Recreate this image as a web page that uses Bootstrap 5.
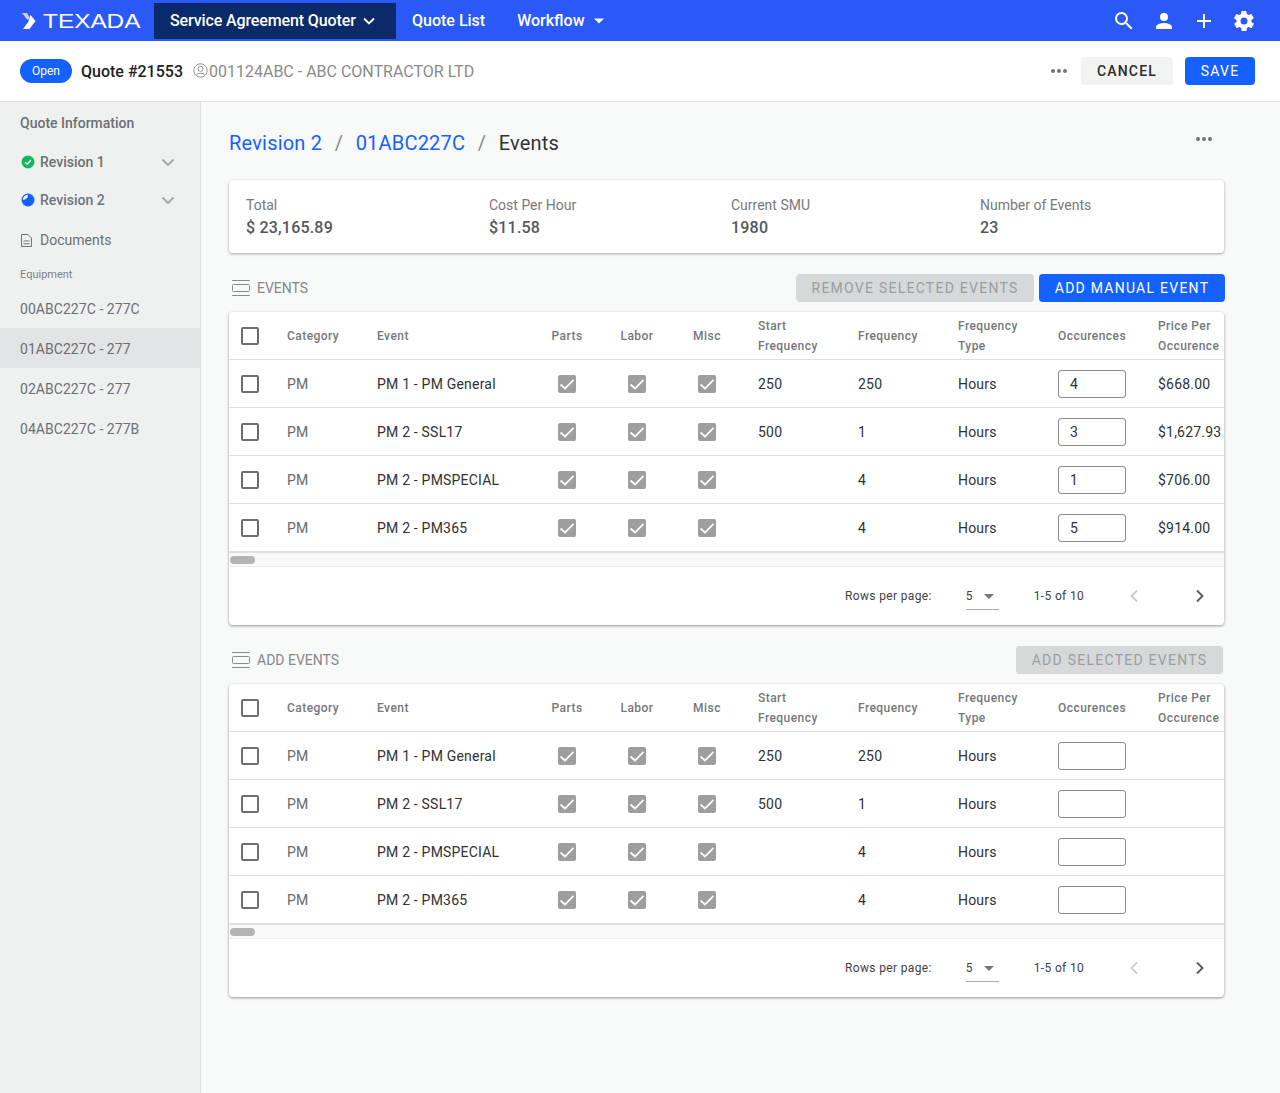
<!DOCTYPE html>
<html lang="en">
<head>
<meta charset="utf-8">
<title>Service Agreement Quoter</title>
<link href="https://cdn.jsdelivr.net/npm/bootstrap@5.3.0/dist/css/bootstrap.min.css" rel="stylesheet">
<style>
html,body{height:100%}
body{font-family:Roboto,"Liberation Sans",sans-serif;background:#f8f9f9;color:#2b2b2b;font-size:14px;overflow:hidden}
.shell{height:1093px;display:flex;flex-direction:column}
.topbar{height:41px;background:#2b59f7;padding:0;flex:none;align-items:stretch;justify-content:flex-start;flex-wrap:nowrap}
.brandbox{width:154px;display:flex;align-items:center;padding-left:22px;gap:7px;color:#fff;text-decoration:none;overflow:hidden}
.brandtxt{font-family:"Liberation Sans",sans-serif;font-size:21px;font-weight:400;line-height:1;display:inline-block;transform:scaleX(1.16);transform-origin:left center}
.topnav{display:flex;align-items:center;gap:0;height:41px}
.topnav a{color:#fff;text-decoration:none;font-size:16px;font-weight:500;display:flex;align-items:center;height:36px;margin-top:1px}
.topnav a.on{background:#0a2a69;width:242px;padding-left:16px;gap:6px;margin-right:16px;letter-spacing:-.12px}
.topnav a.plain{margin-right:32px}
.topicons{margin-left:auto;display:flex;align-items:center;gap:16px;padding-right:24px}
.subbar{height:61px;background:#fff;border-bottom:1px solid #e2e3e3;flex:none;padding:0 25px 0 20px;display:flex;align-items:center}
.pill-open{background:#1561ff;color:#fff;font-size:12px;font-weight:400;width:52px;height:24px;border-radius:12px;display:flex;align-items:center;justify-content:center}
.quote-no{font-size:16px;font-weight:500;color:#222;margin-left:9px;padding-top:2px}
.customer{font-size:16px;color:#8a8a8a;margin-left:10px;display:flex;align-items:center;gap:1px;padding-top:2px}
.customer svg{margin-top:-3px}
.btn-cancel,.btn-save,.btn-off{font-size:14px;font-weight:500;letter-spacing:1.2px;border-radius:4px;height:28px;line-height:28px;padding:0;border:0;text-transform:uppercase}
.btn-cancel{background:#f2f3f3;color:#2b2b2b;width:92px;margin-left:14px}
.btn-save{background:#1561ff;color:#fff;width:70px;margin-left:12px;font-weight:400;letter-spacing:1.25px}
.btn-save:hover,.btn-save:focus{background:#1561ff;color:#fff}
.btn-off,.btn-off:disabled{background:#d6d8d9;color:#9b9ea0;opacity:1;font-weight:400;letter-spacing:1.25px}
.dots{display:inline-flex;gap:2px}
.dots i{width:4px;height:4px;border-radius:50%;background:#707274;display:block}
.bodywrap{flex:1;display:flex;min-height:0}
.sidepane{width:201px;flex:none;background:#eff1f1;border-right:1px solid #dcdfdf;padding-top:1px;color:#6d6f71}
.side-h{font-size:14px;font-weight:500;color:#6d6f71;padding:10px 20px 0;height:40px}
.side-row{display:flex;align-items:center;padding:0 25px 0 21px;font-size:14px;font-weight:500;gap:5px;height:38px}
.side-row svg.chev{margin-left:auto}
.side-doc{font-weight:400;height:40px;margin-top:1px;gap:8px}
.side-eq{font-size:11px;color:#7d7f81;padding:0 20px;margin-top:2px;height:26px;line-height:26px}
.side-item{height:40px;line-height:42px;padding:0 20px;font-size:14px;color:#6d6f71;letter-spacing:.05px}
.side-item.on{background:#e3e4e5}
.mainpane{flex:1;padding:0 56px 0 28px;min-width:0}
.crumbrow{display:flex;height:78px;padding-top:28px;position:relative}
.crumbs{--bs-breadcrumb-divider-color:#8a8a8a;--bs-breadcrumb-item-padding-x:12.5px;--bs-breadcrumb-margin-bottom:0;font-size:20px;line-height:26px;letter-spacing:.2px}
.crumbs a{color:#1561ff;text-decoration:none}
.crumbs .active{color:#333}
.crumbdots{position:absolute;right:12px;top:35px}
.statcard{height:73px;background:#fff;border-radius:4px;box-shadow:0 1px 3px rgba(0,0,0,.35);display:flex;padding:15px 0 0 17px;margin-bottom:21px}
.statlbl{font-size:14px;color:#77797b;line-height:20px}
.statval{font-size:16px;font-weight:500;color:#55575a;line-height:22px;margin-top:2px;letter-spacing:.2px}
.w1{width:243px}.w2{width:242px}.w3{width:249px}
.secthead{display:flex;align-items:center;height:28px;margin-bottom:10px;padding-left:3px;font-size:14px;color:#85878a;gap:7px;margin-right:-1px}
.off1{width:238px;margin-left:auto}
.add1{width:186px;margin-left:-2px}
.off2{width:207px;margin-left:auto;margin-right:2px}
.tblcard{background:#fff;border-radius:4px;box-shadow:0 1px 3px rgba(0,0,0,.4);height:313px;overflow:hidden;margin-bottom:21px}
.tblclip{overflow:hidden;height:240px}
.evt{table-layout:fixed;width:1013px;border-collapse:separate;border-spacing:0;margin:0}
.evt th,.evt td{padding:0;vertical-align:middle;border-bottom:1px solid #e0e0e0;white-space:nowrap;background:transparent}
.evt th{height:48px;font-size:12px;font-weight:500;color:#75777a;letter-spacing:.45px;line-height:20px}
.evt td{height:48px;font-size:14px;color:#2f3133;letter-spacing:.2px;padding-top:2px}
.evt td.cat{color:#66686a}
.evt .ctr{text-align:center}
.evt .cb{padding-left:12px}
.tick{appearance:none;display:block;width:18px;height:18px;margin:0;border:2px solid #6e6e6e;border-radius:2px;background:#fff}
td .tick{margin-top:-2px}
.tick.on{margin:-2px auto 0;border:0;background:#9e9e9e center/18px 18px no-repeat url("data:image/svg+xml,%3Csvg xmlns='http://www.w3.org/2000/svg' viewBox='0 0 18 18'%3E%3Cpath d='M2.500 9.500l4.500 4L15.500 4.800' fill='none' stroke='%23fff' stroke-width='1.700'/%3E%3C/svg%3E")}
.occ{display:block;width:68px;height:28px;margin-top:-2px;border:1px solid #8a8a8a;border-radius:3px;padding:0 11px;font-size:14px;color:#2f3133;background:#fff;font-family:inherit;letter-spacing:.2px}
.scrolltrack{height:15px;background:#f8f9f9;border-top:1px solid #e0e0e0;border-bottom:1px solid #ececec;padding:3px 1px}
.scrollthumb{width:25px;height:8px;background:#b4b4b4;border-radius:4px}
.pager{height:58px;display:flex;align-items:center;font-size:12px;color:#3f4143;letter-spacing:.35px;padding-left:616px}
.pg-sel{width:33px;margin-left:34px;height:25px;border-bottom:1px solid #aaa;display:flex;align-items:center;gap:11px;margin-top:2px;margin-bottom:-1px;padding-bottom:2px}
.pg-range{margin-left:35px;width:95px}
.pg-next{margin-left:56px}
</style>
</head>
<body>
<div class="shell">
  <nav class="navbar topbar">
    <a class="brandbox" href="#">
      <svg width="14" height="16" viewBox="0 0 14 16"><path d="M0 0h5l4 6.500H5z" fill="#c9cfdc"/><path d="M8.500 2L13.500 8l-6 8H1l5.500-7.500z" fill="#fff"/></svg>
      <span class="brandtxt">TEXADA</span>
    </a>
    <div class="topnav">
      <a class="on" href="#">Service Agreement Quoter
        <svg width="14" height="9" viewBox="0 0 14 9"><path d="M2 1.500l5 5 5-5" fill="none" stroke="#fff" stroke-width="1.800"/></svg></a>
      <a class="plain" href="#">Quote List</a>
      <a href="#">Workflow
        <svg class="ms-2" width="12" height="6" viewBox="0 0 12 6"><path d="M1 .5h10L6 5.500z" fill="#fff"/></svg></a>
    </div>
    <div class="topicons">
      <svg width="24" height="24" viewBox="0 0 24 24" fill="#fff"><path d="M15.500 14h-.79l-.28-.27A6.470 6.470 0 0 0 16 9.500 6.500 6.500 0 1 0 9.500 16c1.610 0 3.090-.59 4.230-1.570l.27.28v.79l5 4.990L20.490 19l-4.990-5zm-6 0C7.010 14 5 11.990 5 9.500S7.010 5 9.500 5 14 7.010 14 9.500 11.990 14 9.500 14z"/></svg>
      <svg width="24" height="24" viewBox="0 0 24 24" fill="#fff"><path d="M12 12a4 4 0 1 0 0-8 4 4 0 0 0 0 8zm0 2c-2.700 0-8 1.300-8 4v2h16v-2c0-2.700-5.300-4-8-4z"/></svg>
      <svg width="24" height="24" viewBox="0 0 24 24" fill="#fff"><path d="M19 13h-6v6h-2v-6H5v-2h6V5h2v6h6z"/></svg>
      <svg width="24" height="24" viewBox="0 0 24 24" fill="#fff"><path d="M19.400 13a7.500 7.500 0 0 0 0-2l2.100-1.600a.5.5 0 0 0 .1-.6l-2-3.500a.5.500 0 0 0-.6-.2l-2.500 1a7.300 7.300 0 0 0-1.700-1l-.4-2.700a.5.500 0 0 0-.5-.4h-4a.5.500 0 0 0-.5.400l-.4 2.700a7.700 7.700 0 0 0-1.700 1l-2.500-1a.5.500 0 0 0-.6.200l-2 3.500a.5.500 0 0 0 .1.600L4.600 11a7.900 7.900 0 0 0 0 2l-2.100 1.600a.5.500 0 0 0-.1.600l2 3.500c.1.200.4.300.6.200l2.500-1c.5.400 1.100.7 1.700 1l.4 2.700c0 .2.300.4.500.4h4c.2 0 .5-.2.500-.4l.4-2.700c.6-.3 1.200-.6 1.700-1l2.500 1c.2.100.5 0 .6-.2l2-3.500a.5.500 0 0 0-.1-.6zM12 15.500a3.500 3.500 0 1 1 0-7 3.500 3.500 0 0 1 0 7z"/></svg>
    </div>
  </nav>

  <div class="subbar">
    <span class="pill-open">Open</span>
    <span class="quote-no">Quote #21553</span>
    <span class="customer">
      <svg width="15" height="15" viewBox="0 0 15 15" fill="none" stroke="#8f8f8f"><circle cx="7.500" cy="7.500" r="6.700"/><circle cx="7.500" cy="5.800" r="2.500"/><path d="M3.500 11.500c1.500-1.600 6.500-1.600 8 0"/></svg>001124ABC - ABC CONTRACTOR LTD</span>
    <span class="dots ms-auto"><i></i><i></i><i></i></span>
    <button class="btn btn-cancel" type="button">Cancel</button>
    <button class="btn btn-save" type="button">Save</button>
  </div>

  <div class="bodywrap">
    <aside class="sidepane">
      <div class="side-h">Quote Information</div>
      <div class="side-row">
        <svg width="14" height="14" viewBox="0 0 14 14"><circle cx="7" cy="7" r="6.500" fill="#12b95c"/><path d="M4 7.200l2.200 2L10 5" fill="none" stroke="#fff" stroke-width="1.300"/></svg>
        <span>Revision 1</span>
        <svg class="chev" width="14" height="9" viewBox="0 0 14 9"><path d="M1.500 1.500L7 7l5.500-5.500" fill="none" stroke="#a3a5a7" stroke-width="1.800"/></svg>
      </div>
      <div class="side-row">
        <svg width="14" height="14" viewBox="0 0 14 14"><circle cx="7" cy="7" r="6.500" fill="#1561ff"/><path d="M7 1.800A5.200 5.200 0 0 0 1.800 7C4.800 7 7 4.800 7 1.800z" fill="#fff"/></svg>
        <span class="text-secondary-emphasis">Revision 2</span>
        <svg class="chev" width="14" height="9" viewBox="0 0 14 9"><path d="M1.500 1.500L7 7l5.500-5.500" fill="none" stroke="#a3a5a7" stroke-width="1.800"/></svg>
      </div>
      <div class="side-row side-doc">
        <svg width="11" height="13" viewBox="0 0 11 13" fill="none" stroke="#707274"><path d="M.5.500h6.500l3.500 3.500v8.500H.5z"/><path d="M2.500 7h6M2.500 9.800h6"/></svg>
        <span>Documents</span>
      </div>
      <div class="side-eq">Equipment</div>
      <div class="side-item">00ABC227C - 277C</div>
      <div class="side-item on">01ABC227C - 277</div>
      <div class="side-item">02ABC227C - 277</div>
      <div class="side-item">04ABC227C - 277B</div>
    </aside>

    <main class="mainpane">
      <div class="crumbrow">
        <nav aria-label="breadcrumb">
          <ol class="breadcrumb crumbs">
            <li class="breadcrumb-item"><a href="#">Revision 2</a></li>
            <li class="breadcrumb-item"><a href="#">01ABC227C</a></li>
            <li class="breadcrumb-item active" aria-current="page">Events</li>
          </ol>
        </nav>
        <span class="dots crumbdots"><i></i><i></i><i></i></span>
      </div>

      <section class="statcard">
        <div class="w1"><div class="statlbl">Total</div><div class="statval">$ 23,165.89</div></div>
        <div class="w2"><div class="statlbl">Cost Per Hour</div><div class="statval">$11.58</div></div>
        <div class="w3"><div class="statlbl">Current SMU</div><div class="statval">1980</div></div>
        <div><div class="statlbl">Number of Events</div><div class="statval">23</div></div>
      </section>

      <div class="secthead">
        <svg width="18" height="16" viewBox="0 0 18 16" fill="none" stroke="#8a8c8f"><path d="M0 .5h18M0 15.500h18"/><rect x=".5" y="4.500" width="17" height="7" rx="1"/></svg>
        <span>EVENTS</span>
        <button class="btn btn-off off1" type="button" disabled>Remove selected events</button>
        <button class="btn btn-save add1" type="button">Add manual event</button>
      </div>

      <section class="tblcard">
        <div class="tblclip">
          <table class="table evt">
            <colgroup><col style="width:58px"><col style="width:90px"><col style="width:155px"><col style="width:70px"><col style="width:70px"><col style="width:70px"><col style="width:116px"><col style="width:100px"><col style="width:100px"><col style="width:100px"><col style="width:84px"></colgroup>
            <thead><tr><th class="cb"><input class="tick" type="checkbox"></th><th>Category</th><th>Event</th><th class="ctr">Parts</th><th class="ctr">Labor</th><th class="ctr">Misc</th><th class="ps-3">Start<br>Frequency</th><th>Frequency</th><th>Frequency<br>Type</th><th>Occurences</th><th>Price Per<br>Occurence</th></tr></thead>
            <tbody>
              <tr><td class="cb"><input class="tick" type="checkbox"></td><td class="cat">PM</td><td>PM 1 - PM General</td><td class="ctr"><input class="tick on" type="checkbox" checked></td><td class="ctr"><input class="tick on" type="checkbox" checked></td><td class="ctr"><input class="tick on" type="checkbox" checked></td><td class="ps-3">250</td><td>250</td><td>Hours</td><td><input class="occ" value="4"></td><td>$668.00</td></tr>
              <tr><td class="cb"><input class="tick" type="checkbox"></td><td class="cat">PM</td><td>PM 2 - SSL17</td><td class="ctr"><input class="tick on" type="checkbox" checked></td><td class="ctr"><input class="tick on" type="checkbox" checked></td><td class="ctr"><input class="tick on" type="checkbox" checked></td><td class="ps-3">500</td><td>1</td><td>Hours</td><td><input class="occ" value="3"></td><td>$1,627.93</td></tr>
              <tr><td class="cb"><input class="tick" type="checkbox"></td><td class="cat">PM</td><td>PM 2 - PMSPECIAL</td><td class="ctr"><input class="tick on" type="checkbox" checked></td><td class="ctr"><input class="tick on" type="checkbox" checked></td><td class="ctr"><input class="tick on" type="checkbox" checked></td><td class="ps-3"></td><td>4</td><td>Hours</td><td><input class="occ" value="1"></td><td>$706.00</td></tr>
              <tr><td class="cb"><input class="tick" type="checkbox"></td><td class="cat">PM</td><td>PM 2 - PM365</td><td class="ctr"><input class="tick on" type="checkbox" checked></td><td class="ctr"><input class="tick on" type="checkbox" checked></td><td class="ctr"><input class="tick on" type="checkbox" checked></td><td class="ps-3"></td><td>4</td><td>Hours</td><td><input class="occ" value="5"></td><td>$914.00</td></tr>
            </tbody>
          </table>
        </div>
        <div class="scrolltrack"><div class="scrollthumb"></div></div>
        <div class="pager">
          <span>Rows per page:</span>
          <span class="pg-sel">5<svg width="10" height="5" viewBox="0 0 10 5"><path d="M0 0h10L5 5z" fill="#75777a"/></svg></span>
          <span class="pg-range">1-5 of 10</span>
          <svg width="10" height="14" viewBox="0 0 10 14"><path d="M8 1.500L2.500 7 8 12.500" fill="none" stroke="#c9cbcd" stroke-width="1.800"/></svg>
          <svg class="pg-next" width="10" height="14" viewBox="0 0 10 14"><path d="M2 1.500L7.500 7 2 12.500" fill="none" stroke="#55575a" stroke-width="1.800"/></svg>
        </div>
      </section>

      <div class="secthead">
        <svg width="18" height="16" viewBox="0 0 18 16" fill="none" stroke="#8a8c8f"><path d="M0 .5h18M0 15.500h18"/><rect x=".5" y="4.500" width="17" height="7" rx="1"/></svg>
        <span>ADD EVENTS</span>
        <button class="btn btn-off off2" type="button" disabled>Add selected events</button>
      </div>

      <section class="tblcard">
        <div class="tblclip">
          <table class="table evt">
            <colgroup><col style="width:58px"><col style="width:90px"><col style="width:155px"><col style="width:70px"><col style="width:70px"><col style="width:70px"><col style="width:116px"><col style="width:100px"><col style="width:100px"><col style="width:100px"><col style="width:84px"></colgroup>
            <thead><tr><th class="cb"><input class="tick" type="checkbox"></th><th>Category</th><th>Event</th><th class="ctr">Parts</th><th class="ctr">Labor</th><th class="ctr">Misc</th><th class="ps-3">Start<br>Frequency</th><th>Frequency</th><th>Frequency<br>Type</th><th>Occurences</th><th>Price Per<br>Occurence</th></tr></thead>
            <tbody>
              <tr><td class="cb"><input class="tick" type="checkbox"></td><td class="cat">PM</td><td>PM 1 - PM General</td><td class="ctr"><input class="tick on" type="checkbox" checked></td><td class="ctr"><input class="tick on" type="checkbox" checked></td><td class="ctr"><input class="tick on" type="checkbox" checked></td><td class="ps-3">250</td><td>250</td><td>Hours</td><td><input class="occ"></td><td></td></tr>
              <tr><td class="cb"><input class="tick" type="checkbox"></td><td class="cat">PM</td><td>PM 2 - SSL17</td><td class="ctr"><input class="tick on" type="checkbox" checked></td><td class="ctr"><input class="tick on" type="checkbox" checked></td><td class="ctr"><input class="tick on" type="checkbox" checked></td><td class="ps-3">500</td><td>1</td><td>Hours</td><td><input class="occ"></td><td></td></tr>
              <tr><td class="cb"><input class="tick" type="checkbox"></td><td class="cat">PM</td><td>PM 2 - PMSPECIAL</td><td class="ctr"><input class="tick on" type="checkbox" checked></td><td class="ctr"><input class="tick on" type="checkbox" checked></td><td class="ctr"><input class="tick on" type="checkbox" checked></td><td class="ps-3"></td><td>4</td><td>Hours</td><td><input class="occ"></td><td></td></tr>
              <tr><td class="cb"><input class="tick" type="checkbox"></td><td class="cat">PM</td><td>PM 2 - PM365</td><td class="ctr"><input class="tick on" type="checkbox" checked></td><td class="ctr"><input class="tick on" type="checkbox" checked></td><td class="ctr"><input class="tick on" type="checkbox" checked></td><td class="ps-3"></td><td>4</td><td>Hours</td><td><input class="occ"></td><td></td></tr>
            </tbody>
          </table>
        </div>
        <div class="scrolltrack"><div class="scrollthumb"></div></div>
        <div class="pager">
          <span>Rows per page:</span>
          <span class="pg-sel">5<svg width="10" height="5" viewBox="0 0 10 5"><path d="M0 0h10L5 5z" fill="#75777a"/></svg></span>
          <span class="pg-range">1-5 of 10</span>
          <svg width="10" height="14" viewBox="0 0 10 14"><path d="M8 1.500L2.500 7 8 12.500" fill="none" stroke="#c9cbcd" stroke-width="1.800"/></svg>
          <svg class="pg-next" width="10" height="14" viewBox="0 0 10 14"><path d="M2 1.500L7.500 7 2 12.500" fill="none" stroke="#55575a" stroke-width="1.800"/></svg>
        </div>
      </section>
    </main>
  </div>
</div>
<script src="https://cdn.jsdelivr.net/npm/bootstrap@5.3.0/dist/js/bootstrap.bundle.min.js"></script>
</body>
</html>
